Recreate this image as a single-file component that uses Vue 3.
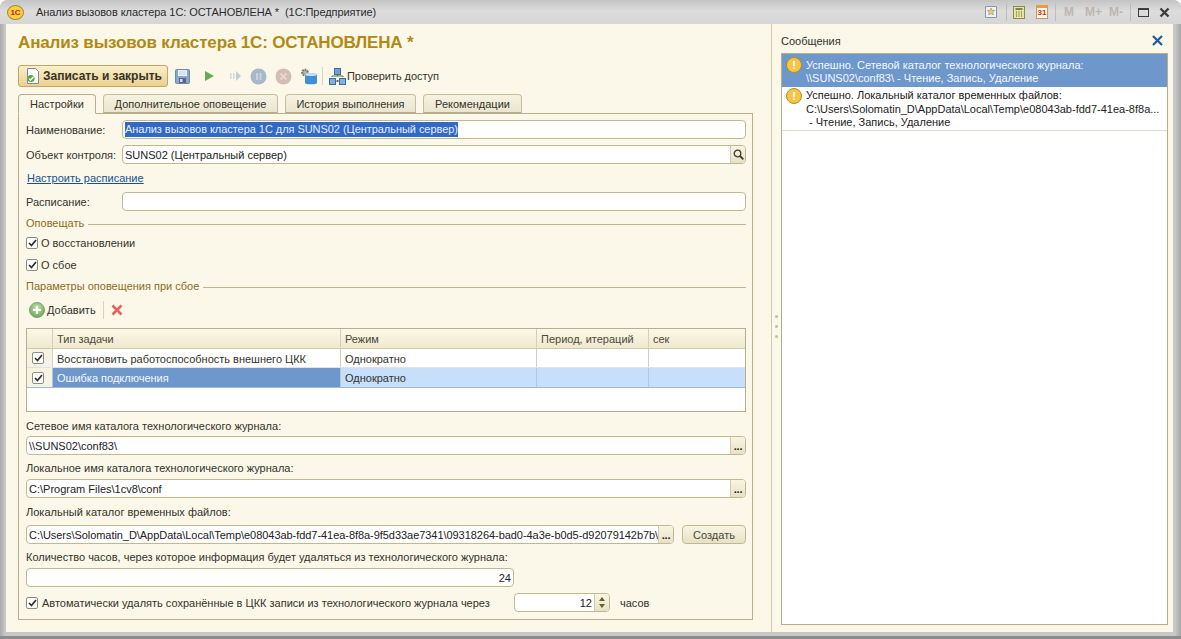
<template>
  <div class="window">
    <div class="titlebar">
      <div class="logo">1C</div>
      <div class="window-title">Анализ вызовов кластера 1С: ОСТАНОВЛЕНА *&nbsp; (1С:Предприятие)</div>
      <div class="title-tools">
        <svg width="12" height="12" viewBox="0 0 12 12"><path d="M.5 .5h11v11H.5z" fill="#eef1f7" stroke="#8a96aa"/><path d="M6 2l1.100 2.300 2.500.3-1.800 1.700.5 2.500L6 7.600 3.700 8.800l.5-2.500L2.400 4.600l2.500-.3z" fill="#e4cf7c" stroke="#a08a3c" stroke-width=".6"/></svg>
        <span class="tool-sep sep-1"></span>
        <svg class="calc" width="12" height="13" viewBox="0 0 12 13"><rect x=".5" y=".5" width="11" height="12" fill="#e9e2a6" stroke="#8d8a4a"/><rect x="2.500" y="2" width="7" height="2" fill="#6d8c46"/><path d="M3 6h1M5.500 6h1M8 6h1M3 8h1M5.500 8h1M8 8h1M3 10h1M5.500 10h1M8 10h1" stroke="#5a6030"/></svg>
        <span class="calendar">31</span>
        <span class="tool-sep sep-2"></span>
        <span class="mem mem-1">M</span>
        <span class="mem mem-2">M+</span>
        <span class="mem mem-3">M-</span>
        <span class="tool-sep sep-3"></span>
        <span class="maximize"></span>
        <svg class="close-win" width="11" height="11" viewBox="0 0 11 11"><path d="M1.500 1.500l8 8M9.500 1.500l-8 8" stroke="#3d3d3d" stroke-width="2.400"/></svg>
      </div>
    </div>

    <div class="body">
      <div class="left">
        <h1 class="form-title">Анализ вызовов кластера 1С: ОСТАНОВЛЕНА *</h1>

        <div class="toolbar">
          <button class="btn-primary">
            <svg width="14" height="16" viewBox="0 0 14 16"><path d="M1.500 .5h8l3 3v12h-11z" fill="#fff" stroke="#7a8aa0"/><circle cx="5" cy="10.500" r="3.600" fill="#58a83a"/><path d="M3 10.500l1.500 1.600 3-3.400" stroke="#fff" stroke-width="1.400" fill="none"/></svg>
            Записать и закрыть
          </button>
          <svg class="tb-save" width="15" height="15" viewBox="0 0 15 15"><rect x=".5" y=".5" width="14" height="14" rx="1" fill="#8ba6c8" stroke="#7088aa"/><rect x="3" y="1" width="9" height="6" fill="#eef2f7"/><path d="M4 3h7M4 5h7" stroke="#c6d2e0"/><rect x="4" y="9" width="7" height="5" fill="#55688a"/><rect x="5" y="10" width="2.500" height="3" fill="#d5dce6"/></svg>
          <svg class="tb-play" width="11" height="12" viewBox="0 0 11 12"><path d="M1 1l9 5-9 5z" fill="#6aab4c"/></svg>
          <svg class="tb-step" width="11" height="10" viewBox="0 0 11 10"><path d="M0 2h1.500v6H0zM3 2h1.500v6H3z" fill="#d3d6dc"/><path d="M6 0l5 5-5 5z" fill="#c6ccd4"/></svg>
          <svg class="tb-round" width="17" height="17" viewBox="0 0 17 17"><circle cx="8.500" cy="8.500" r="8" fill="#a9b7c9"/><path d="M6 5h2v7H6zM9.500 5h2v7h-2z" fill="#c9d2de"/></svg>
          <svg class="tb-round" width="17" height="17" viewBox="0 0 17 17"><circle cx="8.500" cy="8.500" r="8" fill="#d4bdb6"/><path d="M5.500 5.500l6 6M11.500 5.500l-6 6" stroke="#e5d8d2" stroke-width="1.800"/></svg>
          <svg class="tb-gear" width="17" height="17" viewBox="0 0 17 17"><circle cx="5" cy="4.500" r="2.800" fill="#b4b4aa" stroke="#77776f" stroke-width="2.200" stroke-dasharray="1.600 .9"/><path d="M5 6.500c0-1.600 12-1.600 12 0v8.500c0 1.800-12 1.800-12 0z" fill="#3e8fd6"/><ellipse cx="11" cy="6.500" rx="6" ry="1.600" fill="#bfe0f6"/></svg>
          <span class="tb-sep"></span>
          <svg class="tb-access" width="17" height="17" viewBox="0 0 17 17"><rect x="5.500" y=".5" width="6" height="6" fill="#6f9fd0" stroke="#3d6c9f"/><rect x=".5" y="10.500" width="6" height="6" fill="#7fb0de" stroke="#3d6c9f"/><rect x="10.500" y="10.500" width="6" height="6" fill="#7fb0de" stroke="#3d6c9f"/><path d="M3 9V8h11v1M8.500 7v1" stroke="#3d7a3a" fill="none"/><path d="M7.500 13h2" stroke="#3d7a3a" stroke-width="2"/></svg>
          <span class="tb-text">Проверить доступ</span>
        </div>

        <div class="tabs">
          <div v-for="tab in tabs" :key="tab.name" class="tab" :class="{ active: tab.active }" :style="{ width: tab.width + 'px' }">{{ tab.name }}</div>
        </div>

        <div class="panel">
          <div class="row">
            <label class="row-label">Наименование:</label>
            <div class="field grow"><span class="selected">Анализ вызовов кластера 1С для SUNS02 (Центральный сервер)</span></div>
          </div>
          <div class="row row-object">
            <label class="row-label">Объект контроля:</label>
            <div class="field grow with-btn">
              <span class="field-text">SUNS02 (Центральный сервер)</span>
              <span class="field-btn search">
                <svg width="11" height="11" viewBox="0 0 11 11"><circle cx="4.500" cy="4.500" r="3.300" fill="none" stroke="#3c3c30" stroke-width="1.300"/><path d="M7 7l3.300 3.300" stroke="#3c3c30" stroke-width="1.800"/></svg>
              </span>
            </div>
          </div>
          <a class="link">Настроить расписание</a>
          <div class="row row-schedule">
            <label class="row-label">Расписание:</label>
            <div class="field grow"></div>
          </div>

          <div class="group group-first"><span>Оповещать</span><i></i></div>
          <div class="check-row first"><span class="check"><svg width="9" height="8" viewBox="0 0 9 8"><path d="M1 4l2.500 2.500L8 1" fill="none" stroke="#2e2e2e" stroke-width="1.700"/></svg></span>О восстановлении</div>
          <div class="check-row second"><span class="check"><svg width="9" height="8" viewBox="0 0 9 8"><path d="M1 4l2.500 2.500L8 1" fill="none" stroke="#2e2e2e" stroke-width="1.700"/></svg></span>О сбое</div>
          <div class="group group-second"><span>Параметры оповещения при сбое</span><i></i></div>

          <div class="table-toolbar">
            <svg width="16" height="16" viewBox="0 0 16 16"><defs><radialGradient id="plus" cx="50%" cy="35%" r="65%"><stop offset="0" stop-color="#c3e5a8"/><stop offset="1" stop-color="#6aa65a"/></radialGradient></defs><circle cx="8" cy="8" r="7.500" fill="url(#plus)" stroke="#7f9f78"/><path d="M8 4v8M4 8h8" stroke="#fff" stroke-width="2.200"/></svg>
            <span class="add-text">Добавить</span>
            <span class="tb-sep small"></span>
            <svg class="del" width="12" height="12" viewBox="0 0 12 12"><path d="M1.500 1.500l9 9M10.500 1.500l-9 9" stroke="#e2645a" stroke-width="2.600"/></svg>
          </div>

          <div class="grid">
            <div class="grid-head">
              <div class="c c-check"></div>
              <div class="c c-type">Тип задачи</div>
              <div class="c c-mode">Режим</div>
              <div class="c c-period">Период, итераций</div>
              <div class="c c-sec">сек</div>
            </div>
            <div v-for="row in rows" :key="row.type" class="grid-row" :class="{ current: row.current }">
              <div class="c c-check"><span class="check"><svg width="9" height="8" viewBox="0 0 9 8"><path d="M1 4l2.500 2.500L8 1" fill="none" stroke="#2e2e2e" stroke-width="1.700"/></svg></span></div>
              <div class="c c-type">{{ row.type }}</div>
              <div class="c c-mode">{{ row.mode }}</div>
              <div class="c c-period"></div>
              <div class="c c-sec"></div>
            </div>
          </div>

          <div class="caption cap-1">Сетевое имя каталога технологического журнала:</div>
          <div class="field with-btn"><span class="field-text">\\SUNS02\conf83\</span><span class="field-btn">...</span></div>
          <div class="caption cap-2">Локальное имя каталога технологического журнала:</div>
          <div class="field with-btn"><span class="field-text">C:\Program Files\1cv8\conf</span><span class="field-btn">...</span></div>
          <div class="caption cap-3">Локальный каталог временных файлов:</div>
          <div class="row">
            <div class="field grow with-btn"><span class="field-text clip">C:\Users\Solomatin_D\AppData\Local\Temp\e08043ab-fdd7-41ea-8f8a-9f5d33ae7341\09318264-bad0-4a3e-b0d5-d92079142b7b\</span><span class="field-btn">...</span></div>
            <button class="btn-create">Создать</button>
          </div>
          <div class="caption cap-4">Количество часов, через которое информация будет удаляться из технологического журнала:</div>
          <div class="field hours"><span class="field-text align-end">24</span></div>
          <div class="auto-row">
            <span class="check"><svg width="9" height="8" viewBox="0 0 9 8"><path d="M1 4l2.500 2.500L8 1" fill="none" stroke="#2e2e2e" stroke-width="1.700"/></svg></span>
            <span class="auto-text">Автоматически удалять сохранённые в ЦКК записи из технологического журнала через</span>
            <div class="field spin">
              <span class="field-text align-end">12</span>
              <span class="spin-btn"><i class="up"></i><i class="down"></i></span>
            </div>
            <span class="auto-unit">часов</span>
          </div>
        </div>
      </div>

      <div class="splitter"><i></i><i></i><i></i></div>

      <div class="messages">
        <div class="msg-head">
          <span>Сообщения</span>
          <svg width="11" height="11" viewBox="0 0 11 11"><path d="M1 1l9 9M10 1l-9 9" stroke="#1f5a9e" stroke-width="2.200"/></svg>
        </div>
        <div class="msg-list">
          <div v-for="msg in messages" :key="msg.lines[0]" class="msg" :class="{ current: msg.current }">
            <span class="msg-icon">!</span>
            <div class="msg-text">
              <div v-for="line in msg.lines" :key="line">{{ line }}</div>
            </div>
          </div>
        </div>
      </div>
    </div>
  </div>
</template>

<script setup>
const tabs = [
  { name: 'Настройки', width: 78, active: true },
  { name: 'Дополнительное оповещение', width: 175 },
  { name: 'История выполнения', width: 131 },
  { name: 'Рекомендации', width: 99 }
]

const rows = [
  { type: 'Восстановить работоспособность внешнего ЦКК', mode: 'Однократно' },
  { type: 'Ошибка подключения', mode: 'Однократно', current: true }
]

const messages = [
  {
    current: true,
    lines: [
      'Успешно. Сетевой каталог технологического журнала:',
      '\\\\SUNS02\\conf83\\ - Чтение, Запись, Удаление'
    ]
  },
  {
    lines: [
      'Успешно. Локальный каталог временных файлов:',
      'C:\\Users\\Solomatin_D\\AppData\\Local\\Temp\\e08043ab-fdd7-41ea-8f8a...',
      ' - Чтение, Запись, Удаление'
    ]
  }
]
</script>

<style scoped>
.window {
  width: 1181px;
  height: 639px;
  box-sizing: border-box;
  display: flex;
  flex-direction: column;
  font-family: "Liberation Sans", Arial, sans-serif;
  font-size: 11px;
  color: #33332b;
  overflow: hidden;
  border-radius: 8px 8px 0 0;
  border-bottom: 3px solid #8c8c8c;
  background: linear-gradient(to right, #a8a8a8, #c8c8c8 5px, #c8c8c8 calc(100% - 6px), #a4a4a4);
}

.titlebar {
  height: 24px;
  flex: none;
  display: flex;
  align-items: center;
  padding: 0 11px 0 7px;
  background: linear-gradient(#c4c4c4, #dcdcdc 45%, #d6d6d6);
}

.logo {
  width: 15px;
  height: 13px;
  border-radius: 50%;
  background: #f7d23f;
  border: 1px solid #a88a2a;
  color: #c8201a;
  font-size: 8px;
  font-weight: bold;
  line-height: 13px;
  text-align: center;
}

.window-title {
  margin-left: 12px;
  font-size: 11px;
  letter-spacing: -.07px;
  color: #2b2b2b;
}

.title-tools {
  margin-left: auto;
  display: flex;
  align-items: center;
}

.tool-sep {
  width: 1px;
  height: 18px;
  background: #bcbcbc;
}

.sep-1 {
  margin-left: 9px;
}

.calc {
  margin-left: 6px;
}

.calendar {
  width: 12px;
  height: 14px;
  margin-left: 11px;
  box-sizing: border-box;
  border: 1px solid #c49a6a;
  border-top: 3px solid #e0a050;
  background: #fdf6e6;
  color: #c8381a;
  font-size: 8px;
  font-weight: bold;
  line-height: 10px;
  text-align: center;
}

.sep-2 {
  margin-left: 7px;
}

.mem {
  font-size: 12px;
  font-weight: bold;
  color: #bdb6b0;
}

.mem-1 {
  margin-left: 8px;
}

.mem-2 {
  margin-left: 11px;
}

.mem-3 {
  margin-left: 7px;
}

.sep-3 {
  margin-left: 7px;
}

.maximize {
  width: 11px;
  height: 9px;
  box-sizing: border-box;
  margin-left: 7px;
  border: 1px solid #3d3d3d;
  border-top-width: 2px;
}

.close-win {
  margin-left: 10px;
}

.body {
  flex: 1;
  min-height: 0;
  display: flex;
  margin: 0 8px 4px 6px;
  background: #fbf8e9;
}

.left {
  width: 765px;
  flex: none;
  box-sizing: border-box;
  padding-left: 12px;
  padding-right: 18px;
  display: flex;
  flex-direction: column;
}

.form-title {
  margin: 9px 0 0;
  height: 20px;
  font-size: 17px;
  line-height: 20px;
  letter-spacing: -.15px;
  font-weight: bold;
  white-space: nowrap;
  color: #b08a14;
}

.toolbar {
  display: flex;
  align-items: center;
  height: 22px;
  margin-top: 12px;
}

.btn-primary {
  width: 150px;
  height: 22px;
  box-sizing: border-box;
  display: flex;
  align-items: center;
  gap: 3px;
  padding: 0 0 0 7px;
  border: 1px solid #c3a565;
  border-radius: 3px;
  background: linear-gradient(#faefcb, #edd08c);
  font: bold 12px "Liberation Sans", Arial, sans-serif;
  color: #33332b;
  white-space: nowrap;
}

.tb-save {
  margin-left: 7px;
}

.tb-play {
  margin-left: 14px;
}

.tb-step {
  margin-left: 15px;
}

.tb-round {
  margin-left: 9px;
}

.tb-round + .tb-round {
  margin-left: 8px;
}

.tb-gear {
  margin-left: 8px;
}

.tb-sep {
  width: 1px;
  height: 18px;
  margin: 0 5px;
  background: #d8d2b6;
}

.tb-sep.small {
  margin: 0 7px;
}

.tb-access {
  margin-left: 1px;
}

.tb-text {
  margin-left: 1px;
  letter-spacing: -.05px;
  white-space: nowrap;
}

.tabs {
  display: flex;
  gap: 7px;
  height: 19px;
  margin-top: 7px;
  position: relative;
  z-index: 1;
}

.tab {
  box-sizing: border-box;
  height: 19px;
  border: 1px solid #c4bf9b;
  border-bottom: 1px solid #b5b08c;
  border-radius: 4px 4px 0 0;
  background: linear-gradient(#f6f3e2, #e9e5cf);
  text-align: center;
  line-height: 18px;
  white-space: nowrap;
}

.tab.active {
  background: #fbf8e9;
  border-color: #b5b08c;
  border-bottom-color: #fbf8e9;
  height: 20px;
}

.panel {
  height: 507px;
  box-sizing: border-box;
  border: 1px solid #b5b08c;
  padding: 6px 6px 0 7px;
  display: flex;
  flex-direction: column;
}

.row {
  display: flex;
  align-items: center;
}

.row-object {
  margin-top: 6px;
}

.row-schedule {
  margin-top: 7px;
}

.row-label {
  width: 96px;
  flex: none;
  white-space: nowrap;
}

.field {
  height: 19px;
  flex: none;
  box-sizing: border-box;
  border: 1px solid #bfb98f;
  border-radius: 4px;
  background: #fff;
  display: flex;
  align-items: center;
  padding-left: 2px;
  color: #222;
  overflow: hidden;
}

.grow {
  flex: 1;
  min-width: 0;
}

.field-text {
  flex: 1;
  min-width: 0;
  white-space: nowrap;
}

.clip {
  overflow: hidden;
  letter-spacing: -.05px;
}

.align-end {
  text-align: right;
  padding-right: 2px;
}

.selected {
  background: #3169c4;
  color: #e8eefb;
  line-height: 15px;
  letter-spacing: -.05px;
  white-space: nowrap;
}

.with-btn {
  padding-right: 0;
}

.field-btn {
  width: 15px;
  height: 100%;
  flex: none;
  box-sizing: border-box;
  border-left: 1px solid #d0cba8;
  background: linear-gradient(#f8f5e4, #e6e1c6);
  font-weight: bold;
  letter-spacing: -.2px;
  display: flex;
  align-items: center;
  justify-content: center;
}

.link {
  margin-top: 8px;
  height: 13px;
  line-height: 13px;
  color: #15509a;
  text-decoration: underline;
  align-self: flex-start;
  margin-left: 1px;
}

.group {
  display: flex;
  align-items: center;
  gap: 4px;
  color: #8d6d22;
  height: 13px;
}

.group i {
  flex: 1;
  height: 1px;
  background: #bdb78f;
  margin-top: 3px;
}

.group-first {
  margin-top: 5px;
}

.group-second {
  margin-top: 7px;
}

.check-row {
  display: flex;
  align-items: center;
  gap: 3px;
  height: 14px;
}

.check-row.first {
  margin-top: 7px;
}

.check-row.second {
  margin-top: 8px;
}

.check {
  width: 12px;
  height: 12px;
  flex: none;
  box-sizing: border-box;
  border: 1px solid #8f8d7c;
  border-radius: 2px;
  background: #fff;
  display: inline-flex;
  align-items: center;
  justify-content: center;
}

.table-toolbar {
  display: flex;
  align-items: center;
  height: 18px;
  margin-top: 9px;
  padding-left: 3px;
}

.add-text {
  margin-left: 2px;
}

.grid {
  margin-top: 9px;
  height: 84px;
  flex: none;
  box-sizing: border-box;
  border: 1px solid #b5b08c;
  background: #fff;
}

.grid-head {
  height: 20px;
  display: flex;
  background: linear-gradient(#fbf8e9, #efe9cd);
  border-bottom: 1px solid #cfcab0;
  box-sizing: border-box;
  color: #4b4a38;
}

.grid-row {
  height: 19px;
  display: flex;
  box-sizing: border-box;
  border-bottom: 1px solid #dfe3e8;
}

.grid-row.current {
  height: 20px;
  background: #c7dffb;
  border-bottom-color: #9fb9d9;
}

.c {
  box-sizing: border-box;
  flex: none;
  border-right: 1px solid #cfcfc4;
  display: flex;
  align-items: center;
  padding-left: 4px;
  white-space: nowrap;
}

.grid-row .c-type,
.grid-row .c-mode {
  padding-top: 1px;
}

.c-check {
  width: 26px;
  padding-left: 5px;
}

.c-type {
  width: 288px;
}

.c-mode {
  width: 196px;
}

.c-period {
  width: 112px;
}

.c-sec {
  flex: 1;
  border-right: none;
}

.grid-row .c-check {
  background: #f6f3e3;
}

.grid-row.current .c {
  border-right-color: #b2c6dc;
}

.grid-row.current .c-type {
  background: #6e97cb;
  color: #f4f7fc;
}

.caption {
  height: 13px;
  line-height: 13px;
  white-space: nowrap;
}

.cap-1 {
  margin-top: 8px;
  margin-bottom: 3px;
}

.cap-2 {
  margin-top: 7px;
  margin-bottom: 4px;
}

.cap-3 {
  margin-top: 8px;
  margin-bottom: 6px;
}

.cap-4 {
  margin-top: 7px;
  margin-bottom: 4px;
}

.btn-create {
  width: 64px;
  height: 19px;
  margin-left: 8px;
  flex: none;
  box-sizing: border-box;
  border: 1px solid #bfb98f;
  border-radius: 4px;
  background: linear-gradient(#f8f5e4, #e6e1c6);
  font: 11px "Liberation Sans", Arial, sans-serif;
  color: #4b4a38;
  padding: 0;
}

.hours {
  width: 488px;
}

.auto-row {
  display: flex;
  align-items: center;
  margin-top: 6px;
  height: 19px;
}

.auto-text {
  margin-left: 4px;
  width: 472px;
  white-space: nowrap;
}

.spin {
  width: 96px;
  padding-right: 0;
}

.spin-btn {
  width: 15px;
  height: 100%;
  flex: none;
  box-sizing: border-box;
  border-left: 1px solid #d0cba8;
  background: linear-gradient(#f8f5e4, #e6e1c6);
  display: flex;
  flex-direction: column;
  align-items: center;
  justify-content: center;
  gap: 3px;
}

.spin-btn i {
  width: 0;
  height: 0;
  border-left: 3px solid transparent;
  border-right: 3px solid transparent;
}

.spin-btn .up {
  border-bottom: 4px solid #6b5f28;
}

.spin-btn .down {
  border-top: 4px solid #6b5f28;
}

.auto-unit {
  margin-left: 10px;
}

.splitter {
  width: 1px;
  flex: none;
  border-left: 1px solid #cfcab0;
  margin-right: 8px;
  position: relative;
}

.splitter i {
  display: block;
  position: relative;
  left: 3px;
  top: 291px;
  width: 3px;
  height: 3px;
  margin-bottom: 7px;
  border-radius: 50%;
  background: #c4bf9b;
}

.messages {
  flex: 1;
  min-width: 0;
  display: flex;
  flex-direction: column;
  padding-right: 5px;
  padding-bottom: 7px;
}

.msg-head {
  height: 29px;
  flex: none;
  box-sizing: border-box;
  padding-top: 11px;
  display: flex;
  justify-content: space-between;
  align-items: flex-start;
}

.msg-head svg {
  margin: 0 5px 0 0;
}

.msg-list {
  flex: 1;
  box-sizing: border-box;
  border: 1px solid #b5b08c;
  background: #fff;
}

.msg {
  display: flex;
  gap: 4px;
  height: 44px;
  box-sizing: border-box;
  padding: 2px 4px 0;
  border-bottom: 1px solid #dcdcd4;
  color: #222;
  line-height: 13.5px;
}

.msg.current {
  height: 33px;
  padding-top: 5px;
  line-height: 13px;
  border-bottom: none;
  background: #6e97cb;
  color: #f4f7fc;
}

.msg-icon {
  width: 16px;
  height: 16px;
  margin-top: -1px;
  flex: none;
  border-radius: 50%;
  border: 1px solid #b88a20;
  box-sizing: border-box;
  background: #f6c648;
  color: #fff;
  font-weight: bold;
  font-size: 11px;
  line-height: 14px;
  text-align: center;
}

.msg.current .msg-icon {
  margin-top: -2px;
}

.msg-text {
  white-space: pre;
}
</style>

<style>
html, body {
  background: #fff;
}
</style>
